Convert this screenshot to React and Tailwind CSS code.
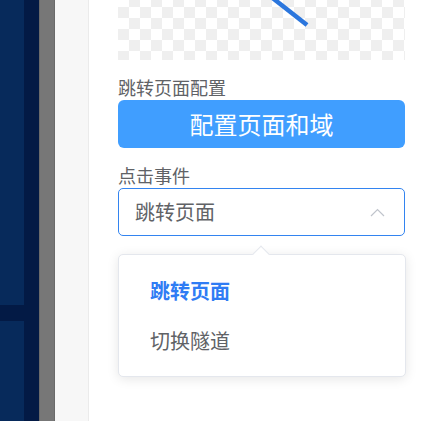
import React from "react";

const cjk = { fontFamily: '"Noto Sans CJK SC", "Noto Sans", sans-serif' };

function ChevronUp() {
  return (
    <svg width="15" height="9" viewBox="0 0 15 9" fill="none">
      <path d="M1 8 L7.5 1.5 L14 8" stroke="#c0c4cc" strokeWidth="1.2" />
    </svg>
  );
}

export default function App() {
  return (
    <div className="flex h-[421px] w-[428px] overflow-hidden bg-white" style={cjk}>
      {/* canvas edge */}
      <div className="flex w-[39px] shrink-0 flex-col bg-[#031a45]">
        <div className="flex w-[24px] flex-1 flex-col gap-[16px]">
          <div className="h-[305px] bg-[#072a5b]" />
          <div className="flex-1 bg-[#072a5b]" />
        </div>
      </div>
      <div className="w-[16px] shrink-0 border-x border-[#6a6a6a] bg-[#777777]" />
      <div className="w-[34px] shrink-0 border-r border-[#ebebeb] bg-[#f7f7f7]" />

      {/* settings panel */}
      <div className="flex w-[315px] shrink-0 flex-col pl-[29px] pr-[23px]">
        <div className="relative h-[60px] w-[287px] bg-[repeating-conic-gradient(#efefef_0%_25%,#ffffff_0%_50%)] bg-[length:22px_22px] bg-[position:0_-4px]">
          <svg className="absolute inset-0" width="287" height="60" viewBox="0 0 287 60">
            <line x1="152" y1="-4" x2="189" y2="25" stroke="#2b76dd" strokeWidth="4.5" />
          </svg>
        </div>

        <div className="mt-[15px] text-[18px] leading-[25px] text-[#606266]">跳转页面配置</div>
        <button className="flex h-[48px] w-[287px] items-center justify-center rounded-[6px] bg-[#409eff] text-[24px] text-white">
          配置页面和域
        </button>

        <div className="mt-[15px] text-[18px] leading-[25px] text-[#606266]">点击事件</div>
        <div className="flex h-[48px] w-[287px] items-center justify-between rounded-[5px] border-[1.5px] border-[#3384f0] pl-[16px] pr-[19px]">
          <span className="text-[20px] text-[#606266]">跳转页面</span>
          <ChevronUp />
        </div>

        <div className="relative mt-[18px] w-[288px] rounded-[5px] border border-[#e4e7ed] bg-white pb-[10px] pt-[11px] shadow-[0_2px_12px_0_rgba(0,0,0,0.1)]">
          <div className="absolute left-[136px] top-[-7px] h-[12px] w-[12px] rotate-45 border-l border-t border-[#e4e7ed] bg-white" />
          <div className="flex h-[50px] items-center pl-[31px] text-[20px] font-bold text-[#2f7cf4]">跳转页面</div>
          <div className="flex h-[50px] items-center pl-[31px] text-[20px] text-[#606266]">切换隧道</div>
        </div>
      </div>
    </div>
  );
}
